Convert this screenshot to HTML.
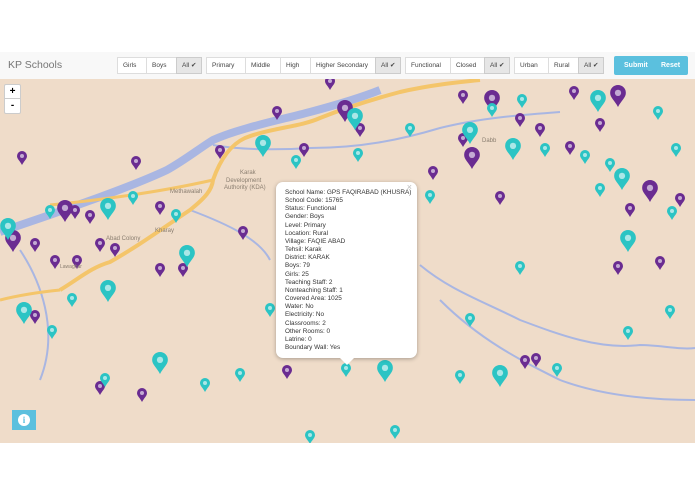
<!DOCTYPE html><html><head><style>
body{margin:0;width:695px;height:494px;background:#fff;font-family:"Liberation Sans",sans-serif;position:relative;overflow:hidden}
.bar{position:absolute;left:0;top:52px;width:695px;height:27px;background:#f8f8f8;border-bottom:1px solid #e7e7e7}
.brand{position:absolute;left:8px;top:59px;font-size:10.5px;color:#777}
.b{position:absolute;top:57px;height:17px;border:1px solid #ddd;background:#fff;font-size:6.5px;color:#444;box-sizing:border-box;line-height:15px;padding-left:5px}
.a{background:#e6e6e6;border-color:#ccc}
.sub{position:absolute;left:614px;top:56px;width:74px;height:19px;background:#5bc0de;color:#fff;font-size:7px;font-weight:bold;line-height:19px;border-radius:2px}
.map{position:absolute;left:0;top:79px;width:695px;height:364px;background:#efdcc9;overflow:hidden}
.pop{position:absolute;left:276px;top:182px;width:141px;height:176px;background:#fff;border-radius:7px;box-shadow:0 1px 4px rgba(0,0,0,.3);font-size:6.4px;color:#333;line-height:8.15px;box-sizing:border-box;padding:7px 0 0 9px}
.pop:after{content:"";position:absolute;left:64px;bottom:-7px;border:7px solid transparent;border-top-color:#fff;border-bottom:0}
.zm{position:absolute;left:4px;top:84px;width:15px;height:28px;background:#fff;border:1px solid #ccc;border-radius:2px;font-size:10px;font-weight:bold;text-align:center;line-height:13px}
.info{position:absolute;left:12px;top:410px;width:24px;height:20px;background:#5bc0de}
</style></head><body>
<div class="bar"></div>
<div class="brand">KP Schools</div>
<div class="b" style="left:117px;width:30px">Girls</div>
<div class="b" style="left:146px;width:31px">Boys</div>
<div class="b a" style="left:176px;width:26px">All ✔</div>
<div class="b" style="left:206px;width:40px">Primary</div>
<div class="b" style="left:245px;width:36px">Middle</div>
<div class="b" style="left:280px;width:31px">High</div>
<div class="b" style="left:310px;width:66px">Higher Secondary</div>
<div class="b a" style="left:375px;width:26px">All ✔</div>
<div class="b" style="left:405px;width:46px">Functional</div>
<div class="b" style="left:450px;width:35px">Closed</div>
<div class="b a" style="left:484px;width:26px">All ✔</div>
<div class="b" style="left:514px;width:35px">Urban</div>
<div class="b" style="left:548px;width:31px">Rural</div>
<div class="b a" style="left:578px;width:26px">All ✔</div>
<div class="sub"><span style="position:absolute;left:10px">Submit</span><span style="position:absolute;left:47px">Reset</span></div>
<div class="map">
<svg width="695" height="364" viewBox="0 79 695 364" style="position:absolute;left:0;top:0">
<defs>
<symbol id="p" viewBox="0 0 10 14"><path d="M5 14 C3 10 0 8 0 5 A5 5 0 0 1 10 5 C10 8 7 10 5 14Z"/><circle cx="5" cy="5" r="2" fill="#fff" opacity=".6"/></symbol>
</defs>
<path d="M0 232 C30 222 70 208 100 197 C130 186 150 178 167 170 C185 160 200 148 213 140 C240 128 280 120 310 112 C340 104 360 98 380 90" stroke="#a9b6e2" stroke-width="8" fill="none"/>
<path d="M213 145 C240 150 280 150 310 148 C360 148 400 140 440 128 C480 118 520 115 560 112" stroke="#a9b6e2" stroke-width="2" fill="none"/>
<path d="M190 210 C230 225 260 240 270 260" stroke="#a9b6e2" stroke-width="2" fill="none"/>
<path d="M420 265 C450 290 480 300 520 320 C560 335 600 350 640 345 C660 345 680 350 695 348" stroke="#a9b6e2" stroke-width="2" fill="none"/>
<path d="M440 300 C480 340 520 360 560 380 C600 395 650 400 695 400" stroke="#a9b6e2" stroke-width="2" fill="none"/>
<path d="M40 380 C60 330 40 280 20 250" stroke="#a9b6e2" stroke-width="2" fill="none"/>
<path d="M60 290 C80 278 90 268 110 262 C140 245 160 230 190 210 C205 198 212 190 213 180 C220 160 230 145 245 138 C270 128 300 127 320 118 C340 110 370 100 400 92 C430 85 460 82 480 80" stroke="#f4c56a" stroke-width="4" fill="none"/>
<path d="M50 205 C100 200 160 192 213 180" stroke="#f4c56a" stroke-width="3" fill="none"/>
<path d="M0 300 C20 295 40 292 60 290" stroke="#f4c56a" stroke-width="3" fill="none"/>
<g fill="#6a2c91">
<use href="#p" x="17" y="151" width="10" height="14"/><use href="#p" x="131" y="156" width="10" height="14"/><use href="#p" x="272" y="106" width="10" height="14"/><use href="#p" x="325" y="76" width="10" height="14"/><use href="#p" x="337" y="100" width="16" height="22"/><use href="#p" x="355" y="123" width="10" height="14"/><use href="#p" x="299" y="143" width="10" height="14"/><use href="#p" x="215" y="145" width="10" height="14"/><use href="#p" x="458" y="90" width="10" height="14"/><use href="#p" x="484" y="90" width="16" height="22"/><use href="#p" x="515" y="113" width="10" height="14"/><use href="#p" x="535" y="123" width="10" height="14"/><use href="#p" x="458" y="133" width="10" height="14"/><use href="#p" x="464" y="147" width="16" height="22"/><use href="#p" x="569" y="86" width="10" height="14"/><use href="#p" x="610" y="85" width="16" height="22"/><use href="#p" x="595" y="118" width="10" height="14"/><use href="#p" x="428" y="166" width="10" height="14"/><use href="#p" x="403" y="185" width="10" height="14"/><use href="#p" x="238" y="226" width="10" height="14"/><use href="#p" x="5" y="230" width="16" height="22"/><use href="#p" x="30" y="238" width="10" height="14"/><use href="#p" x="57" y="200" width="16" height="22"/><use href="#p" x="70" y="205" width="10" height="14"/><use href="#p" x="85" y="210" width="10" height="14"/><use href="#p" x="95" y="238" width="10" height="14"/><use href="#p" x="110" y="243" width="10" height="14"/><use href="#p" x="72" y="255" width="10" height="14"/><use href="#p" x="50" y="255" width="10" height="14"/><use href="#p" x="155" y="201" width="10" height="14"/><use href="#p" x="178" y="263" width="10" height="14"/><use href="#p" x="155" y="263" width="10" height="14"/><use href="#p" x="642" y="180" width="16" height="22"/><use href="#p" x="625" y="203" width="10" height="14"/><use href="#p" x="675" y="193" width="10" height="14"/><use href="#p" x="613" y="261" width="10" height="14"/><use href="#p" x="655" y="256" width="10" height="14"/><use href="#p" x="30" y="310" width="10" height="14"/><use href="#p" x="95" y="381" width="10" height="14"/><use href="#p" x="137" y="388" width="10" height="14"/><use href="#p" x="282" y="365" width="10" height="14"/><use href="#p" x="520" y="355" width="10" height="14"/><use href="#p" x="531" y="353" width="10" height="14"/><use href="#p" x="565" y="141" width="10" height="14"/><use href="#p" x="495" y="191" width="10" height="14"/>
</g>
<g fill="#2bc4c4">
<use href="#p" x="255" y="135" width="16" height="22"/><use href="#p" x="347" y="108" width="16" height="22"/><use href="#p" x="353" y="148" width="10" height="14"/><use href="#p" x="405" y="123" width="10" height="14"/><use href="#p" x="462" y="122" width="16" height="22"/><use href="#p" x="505" y="138" width="16" height="22"/><use href="#p" x="487" y="103" width="10" height="14"/><use href="#p" x="517" y="94" width="10" height="14"/><use href="#p" x="590" y="90" width="16" height="22"/><use href="#p" x="540" y="143" width="10" height="14"/><use href="#p" x="580" y="150" width="10" height="14"/><use href="#p" x="605" y="158" width="10" height="14"/><use href="#p" x="614" y="168" width="16" height="22"/><use href="#p" x="653" y="106" width="10" height="14"/><use href="#p" x="671" y="143" width="10" height="14"/><use href="#p" x="595" y="183" width="10" height="14"/><use href="#p" x="667" y="206" width="10" height="14"/><use href="#p" x="620" y="230" width="16" height="22"/><use href="#p" x="515" y="261" width="10" height="14"/><use href="#p" x="425" y="190" width="10" height="14"/><use href="#p" x="179" y="245" width="16" height="22"/><use href="#p" x="100" y="198" width="16" height="22"/><use href="#p" x="0" y="218" width="16" height="22"/><use href="#p" x="45" y="205" width="10" height="14"/><use href="#p" x="128" y="191" width="10" height="14"/><use href="#p" x="171" y="209" width="10" height="14"/><use href="#p" x="67" y="293" width="10" height="14"/><use href="#p" x="100" y="280" width="16" height="22"/><use href="#p" x="16" y="302" width="16" height="22"/><use href="#p" x="47" y="325" width="10" height="14"/><use href="#p" x="152" y="352" width="16" height="22"/><use href="#p" x="200" y="378" width="10" height="14"/><use href="#p" x="235" y="368" width="10" height="14"/><use href="#p" x="341" y="363" width="10" height="14"/><use href="#p" x="377" y="360" width="16" height="22"/><use href="#p" x="455" y="370" width="10" height="14"/><use href="#p" x="492" y="365" width="16" height="22"/><use href="#p" x="552" y="363" width="10" height="14"/><use href="#p" x="623" y="326" width="10" height="14"/><use href="#p" x="665" y="305" width="10" height="14"/><use href="#p" x="465" y="313" width="10" height="14"/><use href="#p" x="265" y="303" width="10" height="14"/><use href="#p" x="305" y="430" width="10" height="14"/><use href="#p" x="390" y="425" width="10" height="14"/><use href="#p" x="100" y="373" width="10" height="14"/><use href="#p" x="291" y="155" width="10" height="14"/>
</g>
<text x="240" y="174" font-size="6" fill="#8a7e70" font-family="Liberation Sans">Karak</text>
<text x="226" y="182" font-size="6" fill="#8a7e70" font-family="Liberation Sans">Development</text>
<text x="224" y="189" font-size="6" fill="#8a7e70" font-family="Liberation Sans">Authority (KDA)</text>
<text x="170" y="193" font-size="6" fill="#8a7e70" font-family="Liberation Sans">Methawalah</text>
<text x="106" y="240" font-size="6" fill="#8a7e70" font-family="Liberation Sans">Abad Colony</text>
<text x="155" y="232" font-size="6" fill="#8a7e70" font-family="Liberation Sans">Kharay</text>
<text x="60" y="268" font-size="5" fill="#8a7e70" font-family="Liberation Sans">Lawaghar</text>
<text x="482" y="142" font-size="6" fill="#8a7e70" font-family="Liberation Sans">Dabb</text>
</svg>
</div>
<div class="zm">+<div style="border-top:1px solid #ccc">-</div></div>
<div class="info"><div style="position:absolute;left:6px;top:4px;width:12px;height:12px;border-radius:50%;background:#fff;color:#5bc0de;font-size:9px;font-weight:bold;text-align:center;line-height:12px;font-family:'Liberation Serif',serif">i</div></div>
<div class="pop"><span style="position:absolute;right:5px;top:1px;color:#bbb;font-size:9px">×</span>School Name: GPS FAQIRABAD (KHUSRA)<br>School Code: 15765<br>Status: Functional<br>Gender: Boys<br>Level: Primary<br>Location: Rural<br>Village: FAQIE ABAD<br>Tehsil: Karak<br>District: KARAK<br>Boys: 79<br>Girls: 25<br>Teaching Staff: 2<br>Nonteaching Staff: 1<br>Covered Area: 1025<br>Water: No<br>Electricity: No<br>Classrooms: 2<br>Other Rooms: 0<br>Latrine: 0<br>Boundary Wall: Yes</div>
</body></html>
